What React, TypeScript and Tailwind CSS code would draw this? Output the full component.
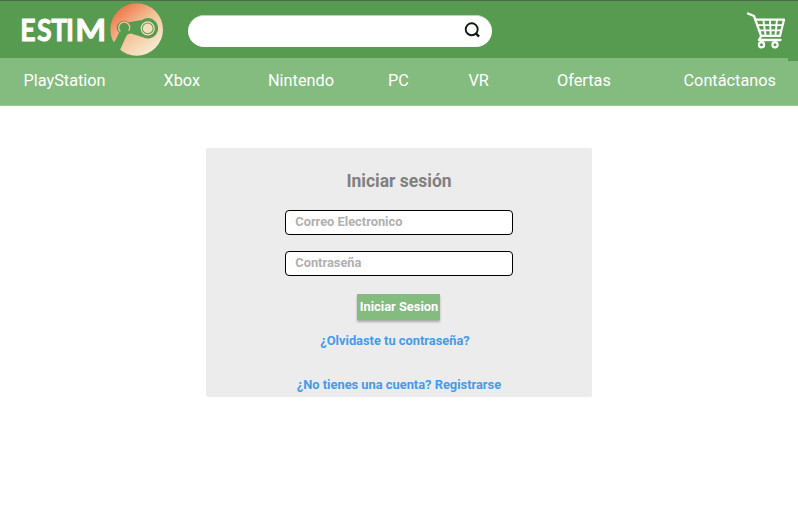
const navItems = [
  { label: "PlayStation", cell: "w-[140px]" },
  { label: "Xbox", cell: "w-[104.5px]" },
  { label: "Nintendo", cell: "w-[120px]" },
  { label: "PC", cell: "w-[80.5px]" },
  { label: "VR", cell: "w-[88.5px]" },
  { label: "Ofertas", cell: "w-[126.5px]" },
  { label: "Contáctanos", cell: "w-[100px]" },
];

function Logo() {
  return (
    <svg className="block h-[57px] w-[144px] shrink-0" viewBox="21 1 144 57" role="img" aria-label="ESTIM">
      <defs>
        <linearGradient id="disc" x1="0.1" y1="0.1" x2="0.75" y2="0.9">
          <stop offset="0" stopColor="#ee6f43" />
          <stop offset="0.5" stopColor="#f4c096" />
          <stop offset="1" stopColor="#f5e8cb" />
        </linearGradient>
      </defs>
      <g transform="translate(20.2 40.7) scale(0.86 1)" fill="#fff" stroke="#fff" strokeWidth="0.9" fontFamily="Lato, sans-serif" fontWeight="700" fontSize="31">
        <text x="0 19.6 36 53.4">ESTI</text>
        <text x="64" textLength="36" lengthAdjust="spacingAndGlyphs">M</text>
      </g>
      <circle cx="136.7" cy="29.5" r="26.3" fill="url(#disc)" />
      <path d="M119.2 32.5Q115.6 29.5 117 25.6C119 20.5 125 19.5 128.5 22.3L142 20A10.2 10.2 0 1 1 143 37.2L131 33.6Q127.6 33.2 126 36.5L119.8 50.5 108 48 114.8 41.2Z" fill="#579b51" />
      <path d="M120.3 31.5a5.5 5.5 0 1 1 8.3-.6" fill="none" stroke="#f4c39b" strokeWidth="1.3" />
      <circle cx="147.7" cy="28.4" r="6.5" fill="none" stroke="#f5dfbd" strokeWidth="1.2" />
      <circle cx="147.7" cy="28.4" r="4.9" fill="#f5dfbd" />
    </svg>
  );
}

function CartIcon() {
  return (
    <svg className="mt-[10.5px] block h-[38px] w-10 shrink-0" viewBox="746 11 40 38" fill="none" stroke="#fff" strokeLinecap="round" strokeLinejoin="round">
      <path d="M748 12.5L754 15 761.2 35 759 39H780.5" strokeWidth="2.3" />
      <path d="M755.5 18.7H784L780 34.8H761.2" strokeWidth="2.2" />
      <path d="M757.5 24.1H782M759.5 29.4H781M763.5 20L765.5 34M770 20L770.7 34M776.8 20L775.5 34" strokeWidth="1.9" />
      <circle cx="761.5" cy="43.8" r="2.6" strokeWidth="2.2" />
      <circle cx="775" cy="43.8" r="2.6" strokeWidth="2.2" />
    </svg>
  );
}

function SearchBar() {
  return (
    <div className="mt-[14px] ml-[23px] flex h-8 w-[303.5px] shrink-0 items-start justify-end rounded-full border-t border-[#b9d6b7] bg-white pt-1.5 pr-[11px]">
      <svg className="h-4 w-[18px]" viewBox="463 22 18 16" fill="none" stroke="#101a10" strokeWidth="1.9">
        <circle cx="471.7" cy="29.3" r="6" />
        <path d="M475.8 33.2L479 36.6" strokeWidth="2.4" />
      </svg>
    </div>
  );
}

function Field({ type, label }: { type: string; label: string }) {
  return (
    <input
      type={type}
      placeholder={label}
      className="block h-[25px] w-[227.5px] rounded-[4px] border border-black bg-white px-[9px] pb-[2px] text-[12.85px] font-bold outline-none placeholder:text-[#b0b0b0] placeholder:opacity-100"
    />
  );
}

export default function App() {
  return (
    <div className="h-[527px] w-[798px] overflow-hidden bg-white font-[Roboto,sans-serif]">
      <header className="flex h-[58px] border-t border-[#4c6a49] bg-[#579b51] pl-[21px]">
        <Logo />
        <SearchBar />
        <div className="mr-3 ml-auto">
          <CartIcon />
        </div>
      </header>
      <nav className="relative flex h-12 border-b border-[#9cc998] bg-[#84bb7f] pt-[11px] pl-[23.5px] text-[16.3px] leading-6 text-white">
        {navItems.map((item) => (
          <a key={item.label} className={`${item.cell} shrink-0 whitespace-nowrap`}>
            {item.label}
          </a>
        ))}
        <span className="absolute top-0 right-0 h-[3px] w-[10px] bg-[#579b51]" />
      </nav>
      <main className="mx-auto mt-[41.5px] flex h-[249px] w-[386.4px] flex-col items-center rounded-[2px] bg-[#ececec] font-bold">
        <h1 className="mt-[21px] text-[17.5px] leading-6 text-[#808080]">Iniciar sesión</h1>
        <form className="mt-[17.5px] flex flex-col items-center gap-4">
          <Field type="email" label="Correo Electronico" />
          <Field type="password" label="Contraseña" />
          <button type="button" className="mt-[2px] h-[26px] w-[83px] bg-[#84bb7f] text-[12.85px] whitespace-nowrap text-white shadow-[0_2px_2px_rgba(0,0,0,0.28)]">
            Iniciar Sesion
          </button>
        </form>
        <a className="mt-[11px] mr-[8px] text-[12.85px] leading-5 text-[#429bee]">¿Olvidaste tu contraseña?</a>
        <a className="mt-6 text-[12.85px] leading-5 text-[#429bee]">¿No tienes una cuenta? Registrarse</a>
      </main>
    </div>
  );
}
